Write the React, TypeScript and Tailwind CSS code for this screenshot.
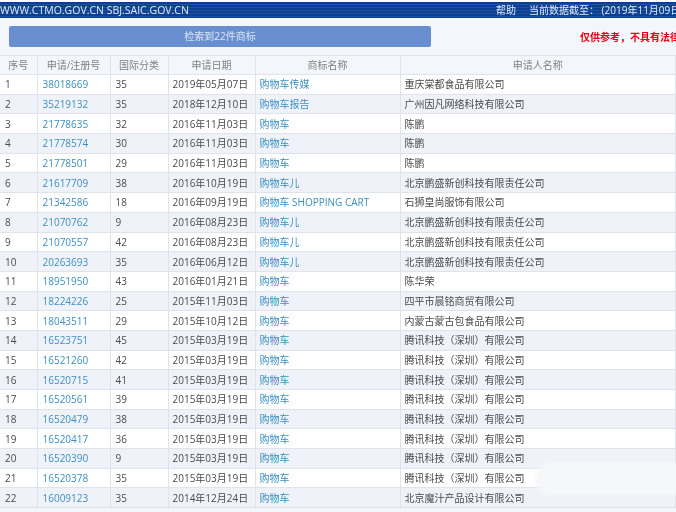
const rows: [string, string, string, string, string, string][] = [
  ['1', '38018669', '35', '2019年05月07日', '购物车传媒', '重庆棠都食品有限公司'],
  ['2', '35219132', '35', '2018年12月10日', '购物车报告', '广州因凡网络科技有限公司'],
  ['3', '21778635', '32', '2016年11月03日', '购物车', '陈鹏'],
  ['4', '21778574', '30', '2016年11月03日', '购物车', '陈鹏'],
  ['5', '21778501', '29', '2016年11月03日', '购物车', '陈鹏'],
  ['6', '21617709', '38', '2016年10月19日', '购物车儿', '北京鹏盛新创科技有限责任公司'],
  ['7', '21342586', '18', '2016年09月19日', '购物车 SHOPPING CART', '石狮皇尚服饰有限公司'],
  ['8', '21070762', '9', '2016年08月23日', '购物车儿', '北京鹏盛新创科技有限责任公司'],
  ['9', '21070557', '42', '2016年08月23日', '购物车儿', '北京鹏盛新创科技有限责任公司'],
  ['10', '20263693', '35', '2016年06月12日', '购物车儿', '北京鹏盛新创科技有限责任公司'],
  ['11', '18951950', '43', '2016年01月21日', '购物车', '陈华荣'],
  ['12', '18224226', '25', '2015年11月03日', '购物车', '四平市晨铭商贸有限公司'],
  ['13', '18043511', '29', '2015年10月12日', '购物车', '内蒙古蒙古包食品有限公司'],
  ['14', '16523751', '45', '2015年03月19日', '购物车', '腾讯科技（深圳）有限公司'],
  ['15', '16521260', '42', '2015年03月19日', '购物车', '腾讯科技（深圳）有限公司'],
  ['16', '16520715', '41', '2015年03月19日', '购物车', '腾讯科技（深圳）有限公司'],
  ['17', '16520561', '39', '2015年03月19日', '购物车', '腾讯科技（深圳）有限公司'],
  ['18', '16520479', '38', '2015年03月19日', '购物车', '腾讯科技（深圳）有限公司'],
  ['19', '16520417', '36', '2015年03月19日', '购物车', '腾讯科技（深圳）有限公司'],
  ['20', '16520390', '9', '2015年03月19日', '购物车', '腾讯科技（深圳）有限公司'],
  ['21', '16520378', '35', '2015年03月19日', '购物车', '腾讯科技（深圳）有限公司'],
  ['22', '16009123', '35', '2014年12月24日', '购物车', '北京魔汁产品设计有限公司'],
];

const th = 'border-r border-b border-[#dfe3ea] font-normal text-center text-[#808080]';
const td = 'border-r border-b border-[#dfe3ea] pl-[5px] pt-px whitespace-nowrap';
const tdTight = 'border-r border-b border-[#dfe3ea] pl-[4px] pt-px whitespace-nowrap';

export default function App() {
  return (
    <div className="relative w-[676px] h-[512px] overflow-hidden bg-[#f3f6fb] text-[10px] text-[#4a4a4a] blur-[0.3px] font-['Open_Sans','Noto_Sans_CJK_SC',sans-serif]">
      <div className="h-[2px] bg-white" />
      <div className="flex h-[16px] items-center bg-[repeating-linear-gradient(180deg,#0e3f8f_0px,#0e3f8f_2px,#1a52a6_2px,#1a52a6_3px)] text-[#e3ebf7]">
        <span className="w-[190px] shrink-0 whitespace-nowrap text-[10.5px] leading-none">WWW.CTMO.GOV.CN SBJ.SAIC.GOV.CN</span>
        <span className="ml-[306px] shrink-0 whitespace-nowrap">帮助</span>
        <span className="ml-[13px] shrink-0 whitespace-nowrap">当前数据截至： (2019年11月09日)</span>
      </div>
      <div className="flex h-[37px] items-start pl-[9px] pt-[8px]">
        <div className="flex h-[21px] w-[422px] shrink-0 items-center justify-center rounded-[2px] bg-[#6a8fd0] text-[#dbe5f5]">
          检索到22件商标
        </div>
        <span className="ml-[149px] mt-[4px] shrink-0 whitespace-nowrap font-bold text-[#e60012]">仅供参考，不具有法律效力</span>
      </div>
      <table className="w-[676px] table-fixed border-collapse border-t border-[#dfe3ea]">
        <colgroup>
          <col className="w-[37px]" />
          <col className="w-[73px]" />
          <col className="w-[58px]" />
          <col className="w-[87px]" />
          <col className="w-[145px]" />
          <col />
        </colgroup>
        <thead>
          <tr className="h-[19px] bg-[#f3f6fb]">
            <th className={th}>序号</th>
            <th className={th}>申请/注册号</th>
            <th className={th}>国际分类</th>
            <th className={th}>申请日期</th>
            <th className={th}>商标名称</th>
            <th className={th}>申请人名称</th>
          </tr>
        </thead>
        <tbody>
          {rows.map((r, i) => (
            <tr key={r[0]} className={i % 2 === 0 ? 'h-[19.7px] bg-white' : 'h-[19.7px] bg-[#eff3f9]'}>
              <td className={td}>{r[0]}</td>
              <td className={td + ' text-[#3d8fc0]'}>{r[1]}</td>
              <td className={td}>{r[2]}</td>
              <td className={tdTight}>{r[3]}</td>
              <td className={tdTight + ' text-[#3d8fc0]'}>{r[4]}</td>
              <td className={tdTight}>{r[5]}</td>
            </tr>
          ))}
        </tbody>
      </table>
      {/* smudge over the last rows */}
      <div className="absolute left-[535px] top-[463px] h-[32px] w-[150px] rounded-l-[16px] bg-[#f6f7f9] blur-[2px]" />
    </div>
  );
}
